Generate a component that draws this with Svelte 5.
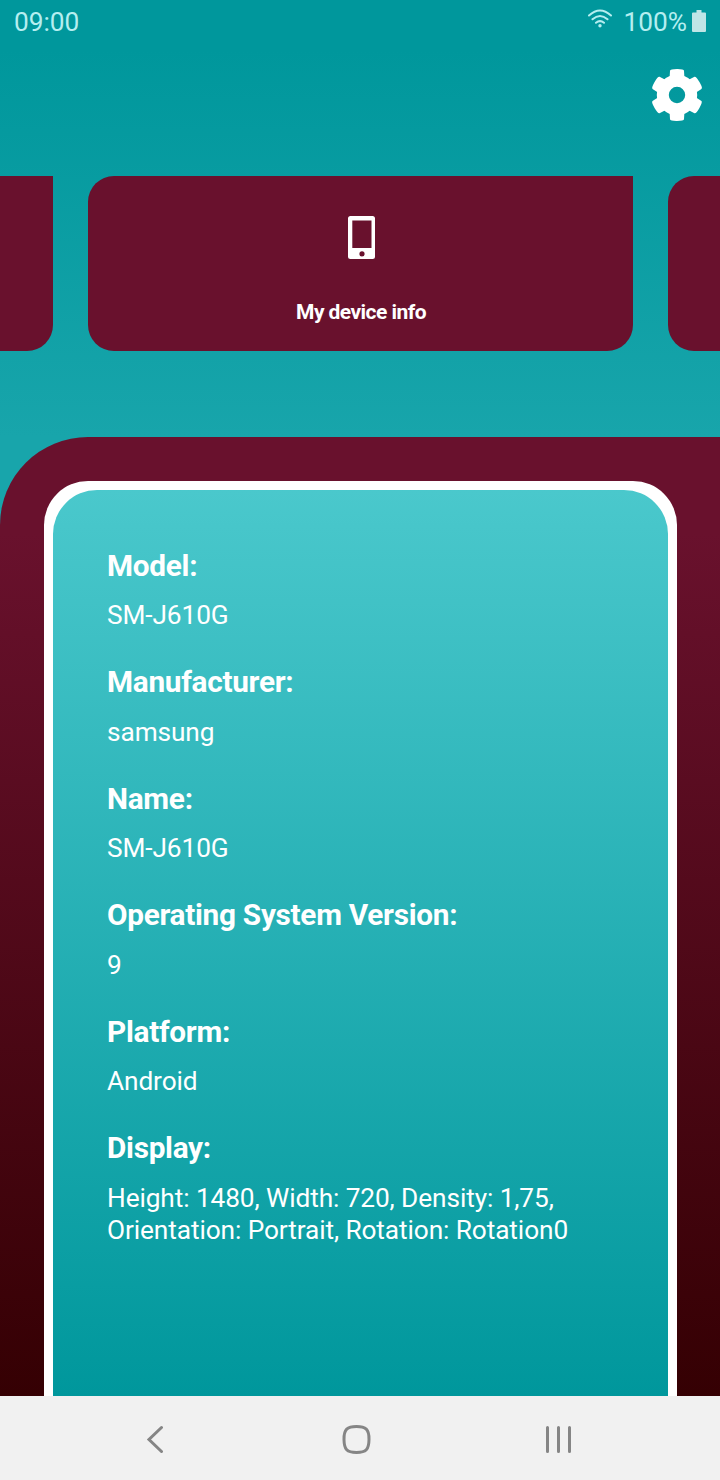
<script>
  const fields = [
    ['Model:', ['SM-J610G'], 116],
    ['Manufacturer:', ['samsung'], 117],
    ['Name:', ['SM-J610G'], 116],
    ['Operating System Version:', ['9'], 117],
    ['Platform:', ['Android'], 116],
    ['Display:', ['Height: 1480, Width: 720, Density: 1,75,', 'Orientation: Portrait, Rotation: Rotation0'], 140]
  ];
  const teeth = [0, 60, 120, 180, 240, 300];
</script>

<div class="screen">
  <header class="status">
    <span class="clock">09:00</span>
    <svg class="wifi" width="26" height="20" viewBox="0 0 26 20" fill="none" stroke="#b5eef0" stroke-width="2" stroke-linecap="round">
      <path d="M2 6.500Q13-3.500 24 6.500M5.500 10.300Q13 3.700 20.500 10.300M9 13.800Q13 10.500 17 13.800" />
      <circle cx="13" cy="16.800" r="1.700" fill="#b5eef0" stroke="none" />
    </svg>
    <span class="percent">100%</span>
    <svg class="battery" width="14" height="22" viewBox="0 0 14 22"><path d="M4.500 0h5v2.500h3.500q1 0 1 1v17.500q0 1-1 1H1q-1 0-1-1V3.500q0-1 1-1h3.500z" fill="#bfe5e6" /></svg>
  </header>
  <div class="toolbar">
    <svg width="52" height="52" viewBox="0 0 52 52">
      <g fill="#fff">
        {#each teeth as angle}
          <path transform="rotate({angle} 26 26)" d="M18.500 11L19 1.800Q19.200 .2 26 .1T33 1.800L33.500 11L29 17H23z" />
        {/each}
      </g>
      <circle cx="26" cy="26" r="14.200" fill="none" stroke="#fff" stroke-width="12" />
    </svg>
  </div>
  <nav class="carousel">
    <div class="tile left"></div>
    <div class="tile">
      <svg width="28" height="44" viewBox="0 0 28 44"><path fill="#fff" fill-rule="evenodd" d="M3.500 0h22q2.500 0 2.500 2.500v38q0 2.500-2.500 2.500H3.500q-2.500 0-2.500-2.500V2.500q0-2.500 2.500-2.500zM5.300 4.500v27.500h19.200V4.500zM15 35.300a2.600 2.600 0 1 0 0 5.200a2.600 2.600 0 1 0 0-5.200z" /></svg>
      <span>My device info</span>
    </div>
    <div class="tile right"></div>
  </nav>
  <main>
    <section class="card">
      <div class="panel">
        {#each fields as [label, lines, height]}
          <div class="field" style="height: {height}px">
            <h2>{label}</h2>
            <p>{#each lines as line}<span>{line}</span>{/each}</p>
          </div>
        {/each}
      </div>
    </section>
  </main>
  <footer>
    <svg width="720" height="84" viewBox="0 0 720 84" fill="none" stroke="#858585" stroke-width="3" stroke-linecap="round">
      <path d="M161.500 31.500L149 43.500L161.500 55.500M547.500 31.500v24M558.500 31.500v24M569.500 31.500v24" />
      <path d="M356.500 30.500q7 0 9.800 2.700t2.700 10.300t-2.700 10.300t-9.800 2.700t-9.800-2.700t-2.700-10.300t2.700-10.300t9.800-2.700z" />
    </svg>
  </footer>
</div>

<style>
  :global(body) { margin: 0; }
  .screen { width: 720px; height: 1480px; overflow: hidden; display: flex; flex-direction: column; background: linear-gradient(#00979c 0, #00979c 50px, #18a5ab 437px, #18a5ab 550px); font-family: Roboto, sans-serif; color: #fff; }
  .status { height: 44px; display: flex; align-items: center; padding: 0 14px; box-sizing: border-box; font-size: 26.25px; color: #b5eef0; }
  .clock { margin-right: auto; }
  .wifi { margin: -6px 11px 0 0; }
  .percent { margin-right: 5px; }
  .battery { margin-top: -3px; }
  .toolbar { height: 132px; display: flex; justify-content: flex-end; padding: 25px 17px 0 0; box-sizing: border-box; }
  .carousel { height: 175px; display: flex; gap: 35px; }
  .tile { flex: 0 0 545px; height: 175px; background: #69112d; border-radius: 26px 0 26px 26px; display: flex; flex-direction: column; align-items: center; padding-top: 40px; box-sizing: border-box; font-size: 21px; font-weight: 700; letter-spacing: -.55px; }
  .tile span { margin: 40px 0 0 1px; line-height: 24px; }
  .left { flex-basis: 53px; border-radius: 0 0 26px 0; }
  .right { flex-basis: 52px; border-radius: 26px 0 0 26px; }
  main { height: 959px; margin-top: 86px; padding: 44px 43px 0 44px; box-sizing: border-box; background: linear-gradient(#69112d 0, #69112d 10%, #350003); border-radius: 88px 0 0 0; }
  .card { height: 915px; box-sizing: border-box; padding: 9px 9px 0; border-radius: 44px 44px 0 0; background: #fff; }
  .panel { height: 906px; box-sizing: border-box; border-radius: 44px 44px 0 0; background: linear-gradient(#4ac8cc, #00979c); padding: 58px 0 0 54px; }
  .field { box-sizing: border-box; }
  h2 { font-size: 29.75px; line-height: 36px; margin: 0; font-weight: 700; letter-spacing: -.28px; }
  p { margin: 15px 0 0; font-size: 26.25px; line-height: 32px; letter-spacing: -.1px; }
  .field:nth-child(even) p { margin-top: 16px; }
  p span { display: block; white-space: nowrap; }
  footer { height: 84px; background: #f1f1f1; }
  footer svg { display: block; }
</style>
